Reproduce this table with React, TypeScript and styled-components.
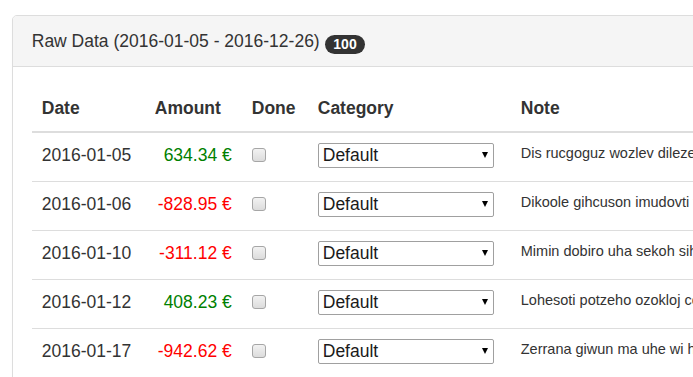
import React from "react";
import styled, { createGlobalStyle } from "styled-components";

type Entry = {
  date: string;
  amount: number;
  done: boolean;
  category: string;
  note: string;
};

const entries: Entry[] = [
  { date: "2016-01-05", amount: 634.34, done: false, category: "Default", note: "Dis rucgoguz wozlev dileze" },
  { date: "2016-01-06", amount: -828.95, done: false, category: "Default", note: "Dikoole gihcuson imudovti v" },
  { date: "2016-01-10", amount: -311.12, done: false, category: "Default", note: "Mimin dobiro uha sekoh sih" },
  { date: "2016-01-12", amount: 408.23, done: false, category: "Default", note: "Lohesoti potzeho ozokloj ce" },
  { date: "2016-01-17", amount: -942.62, done: false, category: "Default", note: "Zerrana giwun ma uhe wi h" },
];

const formatAmount = (n: number) => `${n.toFixed(2)} €`;

const App: React.FC = () => {
  return (
    <>
      <GlobalStyle />
      <Page>
        <Panel>
          <PanelHeading>
            Raw Data (2016-01-05 - 2016-12-26) <Badge>100</Badge>
          </PanelHeading>
          <PanelBody>
            <Table>
              <thead>
                <tr>
                  <Th $width={113}>Date</Th>
                  <Th $width={97}>Amount</Th>
                  <Th $width={66}>Done</Th>
                  <Th $width={203}>Category</Th>
                  <Th>Note</Th>
                </tr>
              </thead>
              <tbody>
                {entries.map((e) => (
                  <tr key={e.date}>
                    <Td>{e.date}</Td>
                    <AmountCell $positive={e.amount >= 0}>
                      {formatAmount(e.amount)}
                    </AmountCell>
                    <Td>
                      <Checkbox type="checkbox" defaultChecked={e.done} />
                    </Td>
                    <Td>
                      <SelectWrap>
                        <Select defaultValue={e.category}>
                          <option>Default</option>
                          <option>Food</option>
                          <option>Rent</option>
                        </Select>
                        <Arrow />
                      </SelectWrap>
                    </Td>
                    <NoteCell>{e.note}</NoteCell>
                  </tr>
                ))}
              </tbody>
            </Table>
          </PanelBody>
        </Panel>
      </Page>
    </>
  );
};

export default App;

const GlobalStyle = createGlobalStyle`
  body {
    margin: 0;
    background: #fff;
    color: #333;
    font-family: "Liberation Sans", Arial, sans-serif;
    font-size: 17.5px;
    line-height: 25px;
    overflow: hidden;
  }
`;

const Page = styled.div`
  padding: 15px 0 0 12px;
`;

const Panel = styled.div`
  width: 900px;
  background: #fff;
  border: 1px solid #ddd;
  border-radius: 5px;
  box-shadow: 0 1px 1px rgba(0, 0, 0, 0.05);
`;

const PanelHeading = styled.div`
  background: #f5f5f5;
  border-bottom: 1px solid #ddd;
  border-radius: 4px 4px 0 0;
  padding: 12.5px 18.75px;
  height: 25px;
`;

const Badge = styled.span`
  display: inline-block;
  vertical-align: -2px;
  background: #333;
  color: #fff;
  font-size: 14px;
  font-weight: bold;
  line-height: 15px;
  padding: 2px 8.75px;
  border-radius: 10px;
`;

const PanelBody = styled.div`
  padding: 18.75px;
`;

const Table = styled.table`
  width: 100%;
  border-collapse: collapse;
  table-layout: fixed;
`;

const Th = styled.th<{ $width?: number }>`
  width: ${(p) => (p.$width ? `${p.$width - 20}px` : "auto")};
  text-align: left;
  font-weight: bold;
  padding: 10px;
  line-height: 25px;
  vertical-align: bottom;
  border-bottom: 2px solid #ddd;
`;

const Td = styled.td`
  padding: 10px;
  height: 28px;
  line-height: 25px;
  vertical-align: top;
  border-top: 1px solid #ddd;
  white-space: nowrap;
`;

const AmountCell = styled(Td)<{ $positive: boolean }>`
  text-align: right;
  color: ${(p) => (p.$positive ? "#008000" : "#ff0000")};
`;

const NoteCell = styled(Td)`
  font-size: 14.5px;
  line-height: 20px;
  overflow: hidden;
`;

const Checkbox = styled.input`
  appearance: none;
  display: block;
  width: 14px;
  height: 14px;
  margin: 5px 0 0;
  border: 1px solid #a6a6a6;
  border-radius: 3px;
  background: linear-gradient(#f2f2f2, #dcdcdc);
  box-sizing: border-box;
`;

const SelectWrap = styled.div`
  position: relative;
  width: 176px;
  height: 25px;
`;

const Select = styled.select`
  appearance: none;
  display: block;
  width: 100%;
  height: 25px;
  margin: 0;
  padding: 0 20px 0 4px;
  box-sizing: border-box;
  border: 1px solid #a0a0a0;
  border-radius: 2px;
  background: #fff;
  color: #1a1a1a;
  font-family: "Liberation Sans", Arial, sans-serif;
  font-size: 17.5px;
  line-height: 23px;
`;

const Arrow = styled.span`
  position: absolute;
  right: 6px;
  top: 9px;
  width: 0;
  height: 0;
  border-left: 3.5px solid transparent;
  border-right: 3.5px solid transparent;
  border-top: 6px solid #000;
  pointer-events: none;
`;
